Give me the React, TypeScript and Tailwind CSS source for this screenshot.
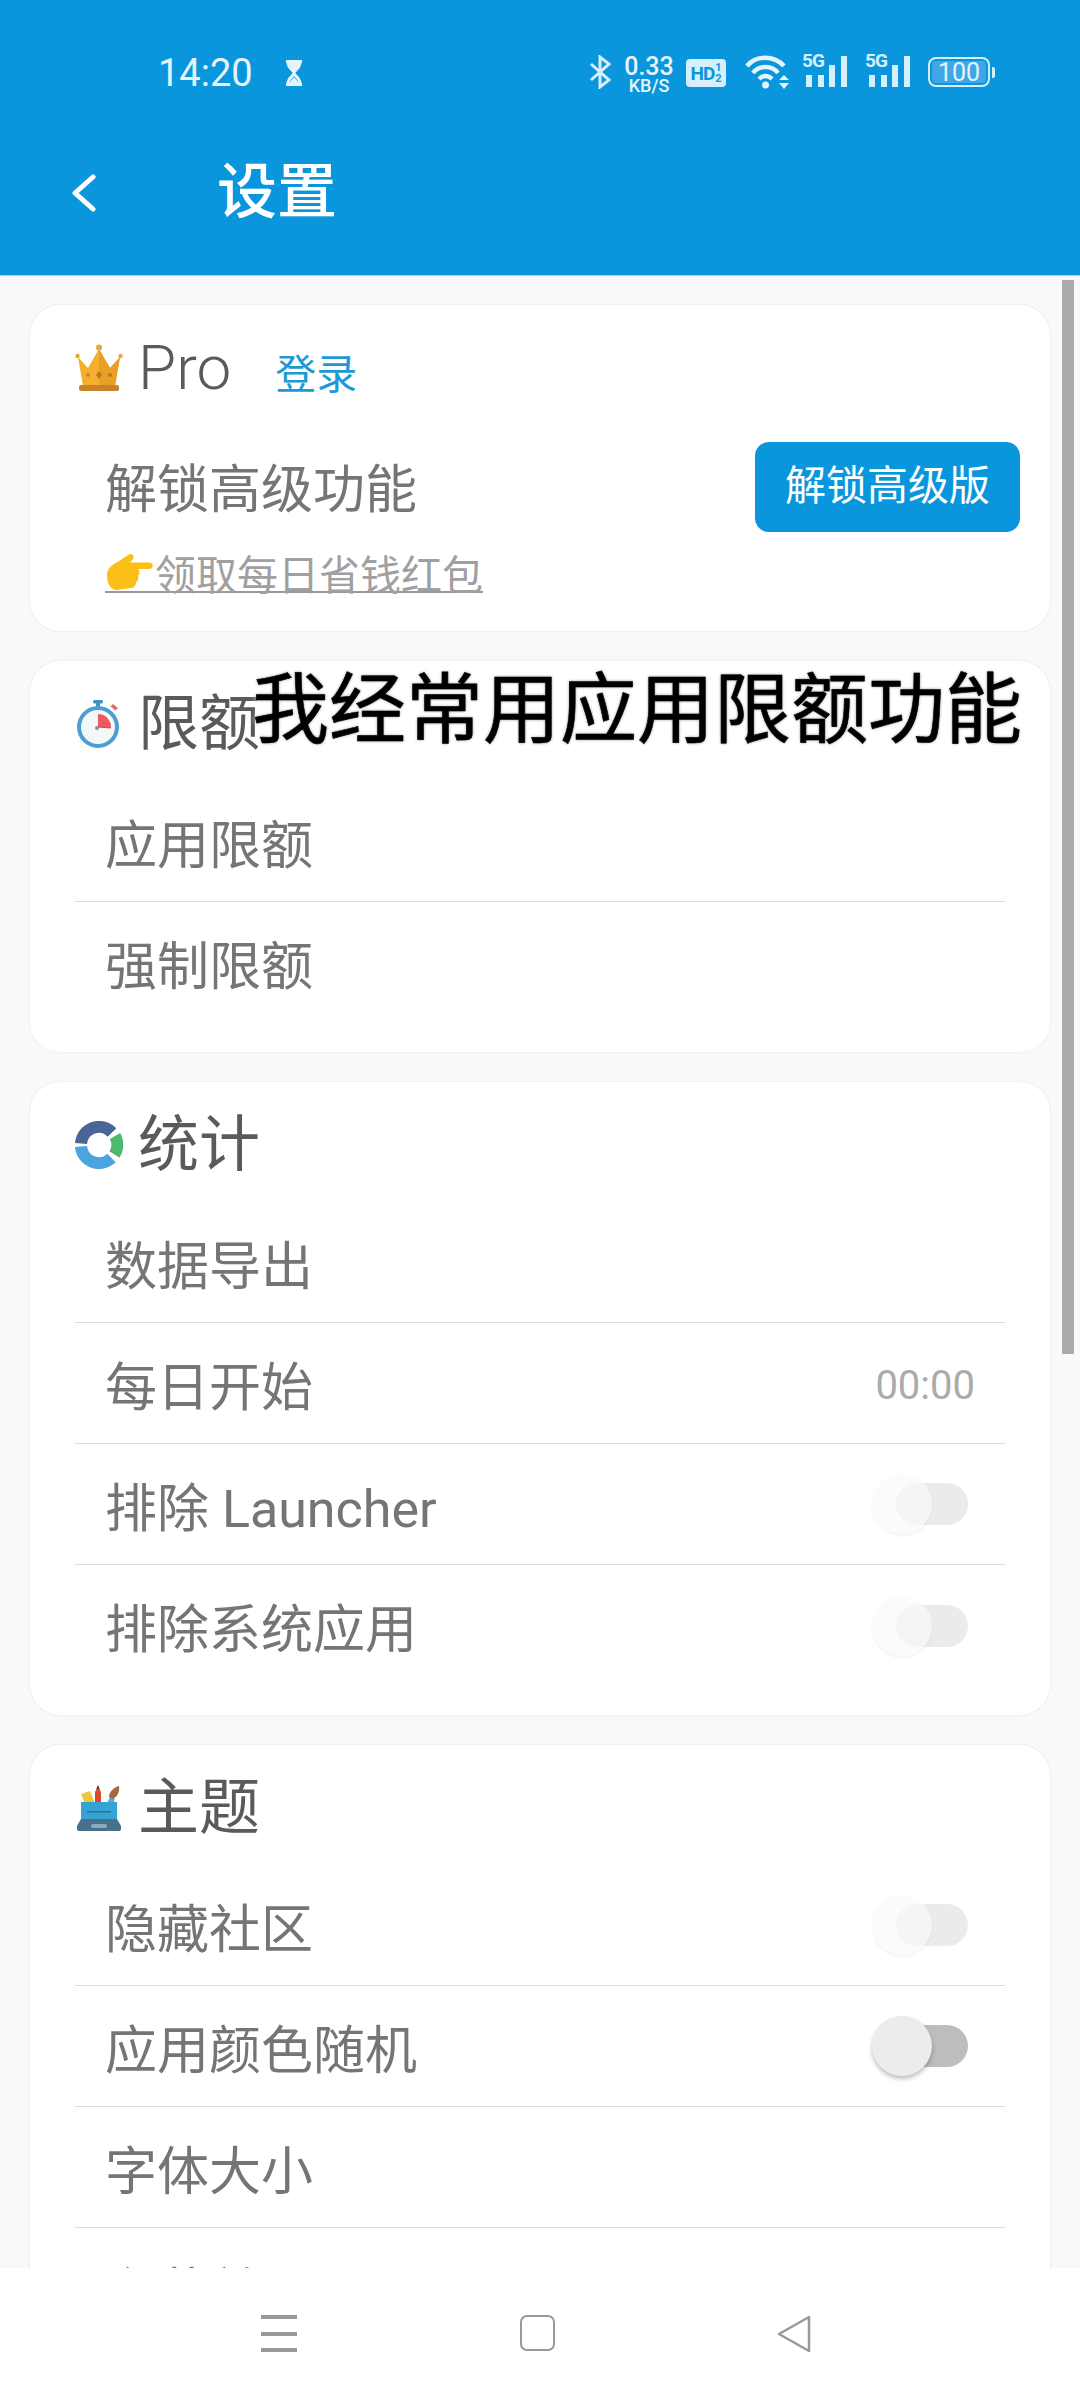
import { ReactNode } from "react";

const Crown = () => (
  <svg width="48" height="48" viewBox="0 0 48 48">
    <circle cx="24" cy="3.5" r="3" fill="#e8a93a" />
    <circle cx="2.5" cy="12" r="2.2" fill="#e8a93a" />
    <circle cx="45.5" cy="12" r="2.2" fill="#e8a93a" />
    <path d="M3 13 L13 24 L24 5 L35 24 L45 13 L40 42 L8 42 Z" fill="#f3b02f" />
    <path d="M24 5 L35 24 L45 13 L40 42 L24 42 Z" fill="#e99f24" />
    <rect x="4" y="41" width="40" height="6" rx="2" fill="#c9822a" />
    <path d="M24 27 l3 4 -3 4 -3 -4 Z" fill="#b9761f" />
    <circle cx="13" cy="31" r="2" fill="#c9862b" />
    <circle cx="35" cy="31" r="2" fill="#b9761f" />
  </svg>
);

const Stopwatch = () => (
  <svg width="48" height="48" viewBox="0 0 48 48">
    <rect x="18" y="0" width="10" height="3.5" rx="1.5" fill="#3f93c4" />
    <rect x="21" y="3" width="4" height="5" fill="#3f93c4" />
    <path d="M38 4 l5 4 -2.5 2.5 -5 -4 Z" fill="#e8686c" />
    <circle cx="23" cy="27" r="19" fill="#f4f7f8" stroke="#4a9fd0" strokeWidth="4" />
    <path d="M23 27 L23 14 A13 13 0 0 1 36 28 Z" fill="#ee5a62" />
    <path d="M23 27 L36 28" stroke="#c9474f" strokeWidth="1" />
    <circle cx="22" cy="28" r="2" fill="#8b8f93" />
  </svg>
);

const Ring = () => (
  <svg width="48" height="48" viewBox="0 0 48 48" fill="none" strokeWidth="12">
    <path d="M6 22.5 A18 18 0 0 1 37 11.5" stroke="#4b6596" />
    <path d="M40 15 A18 18 0 0 1 39.5 33.5" stroke="#4fb86f" />
    <path d="M36.5 37 A18 18 0 0 1 6 25.5" stroke="#4ba3e0" />
  </svg>
);

const Palette = () => (
  <svg width="44" height="48" viewBox="0 0 44 48">
    <path d="M4 10 l9 -3 8 20 -9 3 Z" fill="#f0c63c" />
    <path d="M18 8 l3 -6 3 6 v20 h-6 Z" fill="#e4452f" />
    <path d="M19.5 5 l1.5 -4 1.5 4 Z" fill="#333" />
    <path d="M27 26 l6 -13 5 2 -5 11 Z" fill="#5aa7dc" />
    <path d="M32 13 c0 -6 6 -10 10 -11 1 6 -2 11 -6 13 Z" fill="#a5673f" />
    <path d="M4 18 h36 v20 H4 Z" fill="#35a4d4" />
    <rect x="10" y="27" width="24" height="1.5" fill="#2c6d92" />
    <path d="M4 35 h36 l4 7 v3 a2 2 0 0 1 -2 2 H2 a2 2 0 0 1 -2 -2 v-3 Z" fill="#47708c" />
    <rect x="14" y="40" width="16" height="4" rx="2" fill="#8fa9ba" />
  </svg>
);

const Hand = () => (
  <svg width="48" height="38" viewBox="0 0 48 38" className="mr-[2px] self-end">
    <path
      d="M2 22 C2 15 8 11 14 8 L24 1.5 C27 0 30 3 28 6 L25 9.5 L44 9.5 C49 9.5 49 16 44 16 L33 16 C35 18 35 21 33 23 C34 26 33 28 31 29 C31 32 29 35 26 35 L12 37 C5 37 2 30 2 22 Z"
      fill="#fbbf17"
    />
  </svg>
);

const Switch = ({ disabled }: { disabled?: boolean }) => (
  <div className="relative w-[96px] h-[42px]">
    <div
      className={`absolute left-[24px] top-0 w-[72px] h-[42px] rounded-full ${
        disabled ? "bg-[#ebebeb]" : "bg-[#bdbdbd]"
      }`}
    />
    <div
      className={`absolute left-0 -top-[9px] w-[60px] h-[60px] rounded-full ${
        disabled
          ? "bg-[#fafafa]/70 shadow-[0_2px_3px_rgba(0,0,0,0.05)]"
          : "bg-[#ececec] shadow-[0_3px_4px_rgba(0,0,0,0.25)]"
      }`}
    />
  </div>
);

const Row = ({
  label,
  right,
  last,
}: {
  label: string;
  right?: ReactNode;
  last?: boolean;
}) => (
  <div
    className={`h-[121px] mx-[45px] pl-[30px] flex items-center justify-between ${
      last ? "" : "border-b-[1.5px] border-[#dcdcdc]"
    }`}
  >
    <span className="mt-[11px] text-[52px] leading-none text-[#757575]">{label}</span>
    {right}
  </div>
);

const Card = ({
  icon,
  title,
  tight,
  children,
}: {
  icon: ReactNode;
  title: ReactNode;
  tight?: boolean;
  children: ReactNode;
}) => (
  <section
    className={`mx-[30px] mb-[30px] bg-white rounded-[30px] shadow-[0_0_2px_rgba(0,0,0,0.12)] ${
      tight ? "pb-[38px]" : "pb-[29px]"
    }`}
  >
    <div className="h-[120px] pl-[45px] pt-[6px] flex items-center">
      <div className="w-[48px] flex justify-center">{icon}</div>
      <div className="ml-[15px] text-[61px] leading-none text-[#5a5a5a]">{title}</div>
    </div>
    {children}
  </section>
);

const Signal = () => (
  <div className="relative w-[46px] h-[34px]">
    <span className="absolute left-0 top-[-3px] text-[19px] leading-[22px] font-bold text-[#d6effc] tracking-[-1px]">
      5G
    </span>
    <div className="absolute left-[4px] bottom-0 flex items-end gap-[5.5px]">
      <div className="w-[6px] h-[12px] bg-[#d6effc]" />
      <div className="w-[6px] h-[12px] bg-[#d6effc]" />
      <div className="w-[6px] h-[22px] bg-[#d6effc]" />
      <div className="w-[6px] h-[31px] bg-[#d6effc]" />
    </div>
  </div>
);

const StatusBar = () => (
  <div className="h-[145px] pl-[158px] pt-[50px] flex items-start text-[#e3f4fd]">
    <span className="text-[38px] leading-[46px] w-[126px]">14:20</span>
    <svg width="20" height="26" viewBox="0 0 20 26" className="mt-[10px]" fill="none" stroke="#e3f4fd" strokeWidth="3">
      <path d="M2 1.5 H18 M2 24.5 H18 M4 2 C4 9 10 10 10 13 C10 16 4 17 4 24 M16 2 C16 9 10 10 10 13 C10 16 16 17 16 24" />
      <path d="M5 3 H15 L10 12 Z M5 23 L10 17 L15 23 Z" fill="#e3f4fd" stroke="none" />
    </svg>
    <svg width="24" height="34" viewBox="0 0 24 34" className="ml-[285px] mt-[5px]" fill="none" stroke="#d6effc" strokeWidth="3">
      <path d="M2 9 L20 25 L11 32 V2 L20 9 L2 25" />
    </svg>
    <div className="ml-[11px] w-[50px] flex flex-col items-center font-medium text-[#e3f4fd]">
      <span className="text-[25px] leading-[22px] mt-[6px]">0.33</span>
      <span className="text-[18px] leading-[15px]">KB/S</span>
    </div>
    <div className="ml-[12px] mt-[9px] w-[40px] h-[28px] rounded-[4px] bg-[#d6effc] flex items-center justify-center text-[#0a96dc] font-bold text-[19px] leading-none tracking-[-1px]">
      HD
      <span className="text-[11px] leading-[11px] w-[7px] flex flex-col items-center">
        <span>1</span>
        <span>2</span>
      </span>
    </div>
    <svg width="46" height="36" viewBox="0 0 46 36" className="ml-[19px] mt-[4px]" fill="none" stroke="#e3f4fd" strokeWidth="4.5">
      <path d="M2 12 C11 1 29 1 39 12" />
      <path d="M8 19 C14 11 27 11 33 19" />
      <path d="M14 25 C18 21 23 21 27 25" />
      <circle cx="20.5" cy="31" r="3.5" fill="#e3f4fd" stroke="none" />
      <path d="M34 26 L39 21 L44 26 Z M34 29 L39 35 L44 29 Z" fill="#e3f4fd" stroke="none" />
    </svg>
    <div className="ml-[11px] mt-[3px]">
      <Signal />
    </div>
    <div className="ml-[17px] mt-[3px]">
      <Signal />
    </div>
    <div className="ml-[17px] mt-[7px] flex items-center">
      <div className="w-[62px] h-[30px] rounded-[8px] border-[2.5px] border-[#d6effc] p-[2px]">
        <div className="w-full h-full rounded-[4px] bg-[#3fa7e6] flex items-center justify-center text-[25px] leading-none text-[#e3f4fd]">
          100
        </div>
      </div>
      <div className="ml-[2px] w-[3px] h-[11px] rounded-r-[2px] bg-[#d6effc]" />
    </div>
  </div>
);

export default function App() {
  return (
    <div className="relative w-[1080px] h-[2400px] overflow-hidden flex flex-col bg-[#f9f9f9] font-[Roboto,'Noto_Sans_CJK_SC',sans-serif]">
      <header className="h-[275px] shrink-0 bg-[#0a96dc] shadow-[0_1px_1px_rgba(0,0,0,0.2)] z-10">
        <StatusBar />
        <div className="flex items-center pl-[71px] h-[96px]">
          <svg width="26" height="38" viewBox="0 0 26 38" fill="none" stroke="#fff" strokeWidth="5" strokeLinecap="round" strokeLinejoin="round">
            <path d="M22 3 L4 19 L22 35" />
          </svg>
          <h1 className="ml-[120px] text-[60px] leading-none font-medium text-white">设置</h1>
        </div>
      </header>

      <main className="flex-1 min-h-0 overflow-hidden pt-[30px]">
        <Card
          tight
          icon={<Crown />}
          title={
            <span className="flex items-baseline">
              <span className="font-light text-[62px]">Pro</span>
              <span className="ml-[44px] text-[41px] leading-none text-[#1a9ad6]">登录</span>
            </span>
          }
        >
          <div className="h-[126px] pl-[75px] pr-[30px] flex items-center justify-between">
            <span className="mt-[6px] text-[52px] leading-none text-[#757575]">解锁高级功能</span>
            <button className="mb-[3px] w-[265px] h-[90px] rounded-[14px] bg-[#0a96dc] text-white text-[41px] leading-none">
              解锁高级版
            </button>
          </div>
          <div className="pl-[75px] flex">
            <span className="flex items-start h-[42px] border-b-2 border-[#999] text-[41px] leading-[50px] text-[#a0a0a0]">
              <Hand />
              领取每日省钱红包
            </span>
          </div>
        </Card>

        <Card icon={<Stopwatch />} title="限额">
          <Row label="应用限额" />
          <Row label="强制限额" last />
        </Card>

        <Card icon={<Ring />} title="统计">
          <Row label="数据导出" />
          <Row
            label="每日开始"
            right={<span className="mr-[30px] mt-[5px] text-[40px] leading-none text-[#ababab]">00:00</span>}
          />
          <Row label="排除 Launcher" right={<div className="mr-[37px]"><Switch disabled /></div>} />
          <Row label="排除系统应用" right={<div className="mr-[37px]"><Switch disabled /></div>} last />
        </Card>

        <Card icon={<Palette />} title="主题">
          <Row label="隐藏社区" right={<div className="mr-[37px]"><Switch disabled /></div>} />
          <Row label="应用颜色随机" right={<div className="mr-[37px]"><Switch /></div>} />
          <Row label="字体大小" />
          <Row label="主菜单" last />
        </Card>
      </main>

      <nav className="h-[132px] shrink-0 bg-white flex items-start pt-[47px] z-10">
        <div className="ml-[261px] w-[36px] h-[37px] flex flex-col justify-between">
          <div className="h-[4px] bg-[#999]" />
          <div className="h-[4px] bg-[#999]" />
          <div className="h-[4px] bg-[#999]" />
        </div>
        <div className="ml-[223px] w-[35px] h-[36px] rounded-[7px] border-[2.5px] border-[#999]" />
        <svg width="36" height="38" viewBox="0 0 36 38" className="ml-[222px]" fill="none" stroke="#999" strokeWidth="2.5" strokeLinejoin="round">
          <path d="M32 2 V36 L2 19 Z" />
        </svg>
      </nav>

      {/* scrollbar + caption burned into the recording */}
      <div className="absolute left-[1062px] top-[280px] w-[12px] h-[1074px] bg-[#aaaaaa]" />
      <div className="absolute left-[252px] top-[669px] whitespace-nowrap text-[77px] leading-[84px] font-normal text-black [-webkit-text-stroke:0.6px_#000] [text-shadow:0_0_3px_#777,0_0_6px_#fff]">
        我经常用应用限额功能
      </div>
    </div>
  );
}
